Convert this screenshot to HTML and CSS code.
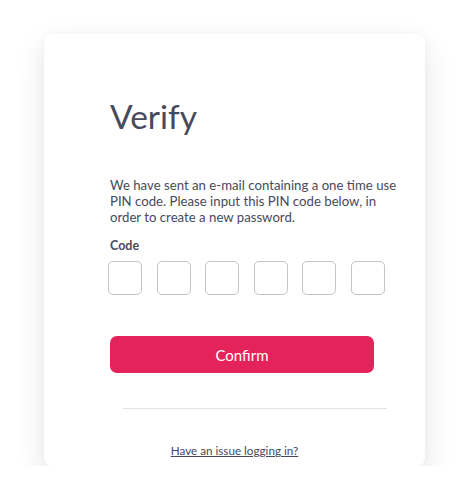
FILE: index.html
```html
<!DOCTYPE html>
<html>
<head>
<meta charset="utf-8">
<link rel="stylesheet" href="styles.css">
</head>
<body>
<div class="card">
  <div class="content">
    <h1 class="title">Verify</h1>
    <p class="desc">We have sent an e-mail containing a one time use PIN code. Please input this PIN code below, in order to create a new password.</p>
    <div class="label">Code</div>
    <div class="pins">
      <div class="pin"></div>
      <div class="pin"></div>
      <div class="pin"></div>
      <div class="pin"></div>
      <div class="pin"></div>
      <div class="pin"></div>
    </div>
    <button class="confirm">Confirm</button>
    <div class="divider"></div>
  </div>
  <div class="footer"><a class="issue" href="#">Have an issue logging in?</a></div>
</div>
</body>
</html>
```
FILE: styles.css
```css
html, body {
  margin: 0;
  padding: 0;
  background: #ffffff;
}
body {
  font-family: "Lato", "Noto Sans", sans-serif;
  color: #474a5a;
  padding: 34px 0 0 44px;
}
.card {
  width: 381px;
  height: 432px;
  box-sizing: border-box;
  background: #ffffff;
  border-radius: 8px;
  box-shadow: 0 12px 30px rgba(0, 0, 0, 0.10), 0 0 12px rgba(0, 0, 0, 0.03);
  display: flex;
  flex-direction: column;
}
.content {
  padding: 0 51px 0 66px;
}
.title {
  margin: 62px 0 0 0;
  font-size: 33.5px;
  line-height: 40px;
  font-weight: 400;
  color: #474a5a;
}
.desc {
  margin: 41px 0 0 0;
  font-size: 13.2px;
  line-height: 16px;
  width: 292px;
}
.label {
  margin-top: 13px;
  font-size: 12.5px;
  font-weight: 700;
  line-height: 16px;
}
.pins {
  margin: 7px 0 0 -2px;
  width: 277px;
  display: flex;
  justify-content: space-between;
}
.pin {
  width: 34px;
  height: 34px;
  box-sizing: border-box;
  border: 1px solid #c4c4c8;
  border-radius: 5px;
}
.confirm {
  display: block;
  margin-top: 41px;
  width: 264px;
  height: 37px;
  border: none;
  border-radius: 7px;
  background: #e32359;
  color: #ffffff;
  font-family: inherit;
  font-size: 15px;
  padding: 0;
}
.divider {
  margin: 35px 0 0 13px;
  width: 264px;
  height: 1px;
  background: #e2e2e4;
}
.footer {
  margin-top: 34px;
  text-align: center;
  font-size: 11.7px;
  line-height: 14px;
}
.issue {
  color: #474a5a;
  text-decoration: underline;
}
```
